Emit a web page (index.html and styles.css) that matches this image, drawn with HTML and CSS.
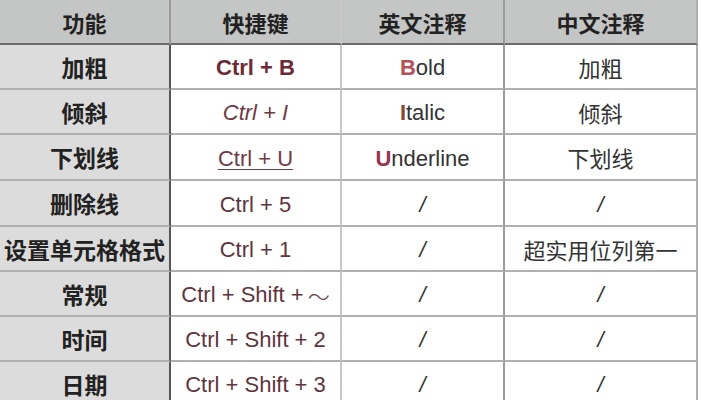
FILE: index.html
```html
<!DOCTYPE html>
<html lang="zh-CN">
<head>
<meta charset="utf-8">
<title>Excel 快捷键</title>
<link rel="stylesheet" href="styles.css">
</head>
<body>
<div class="table">
  <div class="cell head c1">功能</div>
  <div class="cell head c2">快捷键</div>
  <div class="cell head c3">英文注释</div>
  <div class="cell head c4">中文注释</div>

  <div class="cell name c1">加粗</div>
  <div class="cell key c2"><span class="bold">Ctrl + B</span></div>
  <div class="cell en c3"><span class="hl-b">B</span>old</div>
  <div class="cell zh c4">加粗</div>

  <div class="cell name c1">倾斜</div>
  <div class="cell key c2"><span class="italic">Ctrl + I</span></div>
  <div class="cell en c3"><span class="hl-i">I</span>talic</div>
  <div class="cell zh c4">倾斜</div>

  <div class="cell name c1">下划线</div>
  <div class="cell key c2"><span class="under">Ctrl + U</span></div>
  <div class="cell en c3"><span class="hl-u">U</span>nderline</div>
  <div class="cell zh c4">下划线</div>

  <div class="cell name c1">删除线</div>
  <div class="cell key c2">Ctrl + 5</div>
  <div class="cell en c3 slash">/</div>
  <div class="cell zh c4 slash">/</div>

  <div class="cell name c1">设置单元格格式</div>
  <div class="cell key c2">Ctrl + 1</div>
  <div class="cell en c3 slash">/</div>
  <div class="cell zh c4">超实用位列第一</div>

  <div class="cell name c1">常规</div>
  <div class="cell key c2">Ctrl + Shift + <span class="tilde">～</span></div>
  <div class="cell en c3 slash">/</div>
  <div class="cell zh c4 slash">/</div>

  <div class="cell name c1">时间</div>
  <div class="cell key c2">Ctrl + Shift + 2</div>
  <div class="cell en c3 slash">/</div>
  <div class="cell zh c4 slash">/</div>

  <div class="cell name c1">日期</div>
  <div class="cell key c2">Ctrl + Shift + 3</div>
  <div class="cell en c3 slash">/</div>
  <div class="cell zh c4 slash">/</div>
</div>
</body>
</html>
```
FILE: styles.css
```css
html, body {
  margin: 0;
  padding: 0;
  background: #ffffff;
}

body {
  font-family: "Liberation Sans", "Noto Sans CJK SC", Arial, sans-serif;
  width: 701px;
  height: 400px;
  overflow: hidden;
}

.table {
  display: grid;
  grid-template-columns: 171px 171px 163px 193px;
  grid-template-rows: 45px 45px 45px 46px 46px 45px 45px 45px 45px;
}

.cell {
  display: flex;
  align-items: center;
  justify-content: center;
  box-sizing: border-box;
  padding-top: 3px;
  border-bottom: 2px solid #b0b0b0;
  border-right: 2px solid #b8b8b8;
  font-size: 22px;
  color: #2e2e2e;
  white-space: nowrap;
  background: #ffffff;
}

.head {
  background: #c4c5c5;
  font-weight: bold;
  color: #222;
  font-family: "Noto Sans CJK SC", sans-serif;
  padding-top: 0;
  border-bottom-color: #6a6a6a;
  border-right-color: #a8a8a8;
}

.name {
  background: #dcdcdc;
  font-weight: bold;
  color: #222;
  font-size: 23px;
  font-family: "Noto Sans CJK SC", sans-serif;
  padding-top: 0;
}

.c1 { border-right-color: #555555; }
.head.c1 { border-right-color: #9a9a9a; }
.c2 { border-right-color: #c8c8c8; }
.c3 { border-right-color: #9c9c9c; }
.c4 { border-right-color: #b0b0b0; }

.key {
  color: #5e3440;
  font-size: 22px;
}

.bold { font-weight: bold; color: #6c2a37; }
.italic { font-style: italic; color: #6e3a46; }
.under { text-decoration: underline; text-underline-offset: 3px; text-decoration-thickness: 1px; color: #6e3a46; }

.tilde {
  font-family: "Noto Sans CJK SC", sans-serif;
  font-weight: 300;
  margin-left: 4px;
}

.en { color: #333; }
.hl-b { color: #b4525a; font-weight: bold; }
.hl-i { color: #8a4535; font-weight: bold; }
.hl-u { color: #963452; font-weight: bold; }

.zh {
  font-family: "Noto Sans CJK SC", sans-serif;
  color: #333;
  padding-top: 0;
}

.slash {
  font-family: "Liberation Sans", sans-serif;
  font-style: italic;
  color: #333;
  padding-top: 3px;
}
```
